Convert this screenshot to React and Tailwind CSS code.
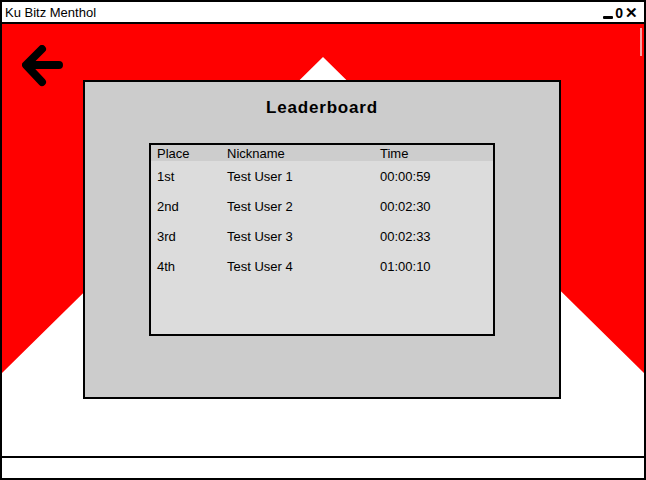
import React from "react";

const rows = [
  { place: "1st", nick: "Test User 1", time: "00:00:59" },
  { place: "2nd", nick: "Test User 2", time: "00:02:30" },
  { place: "3rd", nick: "Test User 3", time: "00:02:33" },
  { place: "4th", nick: "Test User 4", time: "01:00:10" },
];

export default function App() {
  return (
    <div className="w-[646px] h-[480px] bg-white border-2 border-black flex flex-col font-['Liberation_Sans',Arial,sans-serif] text-black">
      {/* title bar */}
      <div className="h-[22px] shrink-0 border-b-2 border-black flex items-center justify-between pl-[3px] pr-[6px]">
        <span className="text-[13px] leading-none">Ku Bitz Menthol</span>
        <div className="flex items-end gap-[2px] text-[14px] font-bold leading-none">
          <span className="w-[10px] h-[3px] bg-black rounded-[1px] mb-[1px]"></span>
          <span>0</span>
          <span className="text-[15px]">✕</span>
        </div>
      </div>

      {/* content */}
      <div className="relative flex-1 bg-white">
        <svg className="absolute inset-0" width="642" height="432" viewBox="0 0 642 432">
          <polygon points="0,0 642,0 642,349 321,33 0,349" fill="#ff0000" />
        </svg>
        <div className="absolute right-[2px] top-[4px] w-[2px] h-[28px] bg-[#f5a0a0]"></div>

        <div className="relative">
          <svg className="absolute left-[20px] top-[21px]" width="42" height="42" viewBox="0 0 42 42">
            <path d="M20 4 L4 20 L20 37 M5 20 L37 20" fill="none" stroke="#000" strokeWidth="8" strokeLinecap="round" strokeLinejoin="round" />
          </svg>

          <div className="pt-[56px] pl-[81px]">
            <div className="w-[478px] h-[319px] bg-[#cccccc] border-2 border-black flex flex-col items-center">
              <h1 className="mt-[16px] text-[17px] font-bold tracking-[0.8px] leading-[20px]">Leaderboard</h1>
              <div className="mt-[25px] w-[346px] h-[193px] bg-[#dcdcdc] border-2 border-black text-[13px]">
                <div className="flex h-[16px] pt-[1px] items-center bg-[#cdcdcd] leading-none">
                  <span className="w-[76px] pl-[6px]">Place</span>
                  <span className="w-[153px]">Nickname</span>
                  <span>Time</span>
                </div>
                {rows.map((r) => (
                  <div key={r.place} className="flex h-[30px] items-center leading-none">
                    <span className="w-[76px] pl-[6px]">{r.place}</span>
                    <span className="w-[153px]">{r.nick}</span>
                    <span>{r.time}</span>
                  </div>
                ))}
              </div>
            </div>
          </div>
        </div>
      </div>

      {/* status bar */}
      <div className="h-[22px] shrink-0 border-t-2 border-black bg-white"></div>
    </div>
  );
}
